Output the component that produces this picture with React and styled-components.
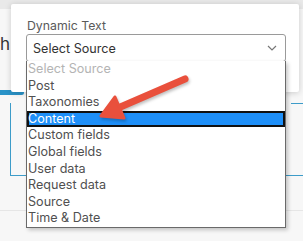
import React from 'react'
import styled, { createGlobalStyle } from 'styled-components'

const GlobalStyle = createGlobalStyle`
  html, body {
    margin: 0;
    padding: 0;
    background: #f6f6f6;
    font-family: Inter, "Noto Sans", sans-serif;
  }
`

const Page = styled.div`
  position: relative;
  width: 303px;
  height: 241px;
  overflow: hidden;
  background: #f7f7f7;
`

const TopBar = styled.div`
  height: 9px;
  background: #e9e9e9;
`

const Heading = styled.div`
  margin-top: 27px;
  height: 16px;
  font-size: 17px;
  line-height: 16px;
  color: #333;
`

const TabMark = styled.div`
  margin-top: 38px;
  width: 24px;
  height: 5px;
  background: #2a93c8;
  border-radius: 0 3px 3px 0;
`

const Panel = styled.div`
  margin-left: 10px;
  height: 72px;
  border-left: 1px solid #3d9cc9;
  border-bottom: 1px solid #3d9cc9;
  &::after {
    content: '';
    display: block;
    margin-left: 280px;
    margin-top: 8px;
    height: 1px;
    background: #3d9cc9;
  }
`

const Divider = styled.div`
  margin-top: 34px;
  height: 1px;
  background: #e6e6e6;
`

const Popup = styled.div`
  position: absolute;
  left: 11px;
  top: 4px;
  width: 288px;
  height: 88px;
  box-sizing: border-box;
  padding: 15px 13px 0 15px;
  background: #fff;
  box-shadow: 0 1px 6px rgba(0, 0, 0, 0.18);
  border-radius: 2px;
`

const Label = styled.div`
  padding-left: 1px;
  font-size: 12.3px;
  line-height: 14px;
  color: #5a5a5a;
  margin-bottom: 1px;
`

const SelectWrap = styled.div`
  position: relative;
`

const SelectBox = styled.div`
  height: 28px;
  box-sizing: border-box;
  border: 1px solid #9a9a9a;
  border-radius: 3px;
  display: flex;
  align-items: center;
  justify-content: space-between;
  padding: 0 8px 0 6px;
  font-size: 12.6px;
  color: #333;
`

const Chevron = styled.svg`
  width: 10px;
  height: 6px;
`

const List = styled.ul`
  position: absolute;
  left: 0;
  top: 27px;
  width: 260px;
  margin: 0;
  padding: 0;
  list-style: none;
  background: #fff;
  border: 1px solid #6a6a6a;
  border-top: none;
  box-sizing: border-box;
  box-shadow: 2px 2px 4px rgba(0, 0, 0, 0.22);
`

const Item = styled.li`
  height: 16.6px;
  line-height: 16.6px;
  padding-left: 1px;
  font-size: 12.6px;
  box-sizing: border-box;
  color: ${p => (p.$placeholder ? '#b4b4b4' : p.$active ? '#fff' : '#505050')};
  background: ${p => (p.$active ? '#1e8ff8' : 'transparent')};
  box-shadow: ${p => (p.$active ? 'inset 0 0 0 2px #111' : 'none')};
`

const Arrow = styled.svg`
  position: absolute;
  left: 0;
  top: 0;
  width: 303px;
  height: 241px;
  pointer-events: none;
  filter: drop-shadow(1px 2px 1.5px rgba(0, 0, 0, 0.25));
`

const options = [
  'Post',
  'Taxonomies',
  'Content',
  'Custom fields',
  'Global fields',
  'User data',
  'Request data',
  'Source',
  'Time & Date',
]

export default function App() {
  return (
    <Page>
      <GlobalStyle />
      <TopBar />
      <Heading>h</Heading>
      <TabMark />
      <Panel />
      <Divider />

      <Popup>
        <Label>Dynamic Text</Label>
        <SelectWrap>
          <SelectBox>
            <span>Select Source</span>
            <Chevron viewBox="0 0 10 6">
              <path d="M1 1l4 4 4-4" fill="none" stroke="#777" strokeWidth="1.2" />
            </Chevron>
          </SelectBox>
          <List>
            <Item $placeholder>Select Source</Item>
            {options.map(o => (
              <Item key={o} $active={o === 'Content'}>{o}</Item>
            ))}
          </List>
        </SelectWrap>
      </Popup>

      <Arrow viewBox="0 0 303 241">
        <line x1="185" y1="79" x2="118" y2="108" stroke="#e9503c" strokeWidth="7" strokeLinecap="round" />
        <path d="M101 116 L124 118 L115 97 Z" fill="#e9503c" stroke="#e9503c" strokeWidth="3" strokeLinejoin="round" />
      </Arrow>
    </Page>
  )
}
